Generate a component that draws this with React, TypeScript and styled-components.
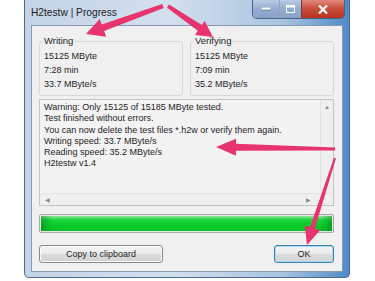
import styled, { createGlobalStyle } from "styled-components";

const GlobalStyle = createGlobalStyle`
  html, body {
    margin: 0;
    padding: 0;
    background: #ffffff;
  }
  body {
    font-family: "Liberation Sans", Arial, sans-serif;
    overflow: hidden;
  }
`;

const Stage = styled.div`
  position: relative;
  width: 375px;
  height: 281px;
`;

const Window = styled.div`
  margin-left: 24px;
  width: 326px;
  height: 278px;
  box-sizing: border-box;
  border: 1px solid #4a6a92;
  border-top: none;
  border-radius: 0 0 5px 5px;
  display: flex;
  flex-direction: column;
  background: linear-gradient(to right, #c3d4e7 0%, #d3e0ee 45%, #a8c3e0 80%, #4f8bc6 100%);
`;

const TitleBar = styled.div`
  height: 25px;
  display: flex;
  align-items: flex-start;
  justify-content: space-between;
  padding-left: 6px;
  padding-right: 4px;
  flex-shrink: 0;
`;

const Title = styled.span`
  font-size: 10.2px;
  line-height: 26px;
  color: #1c1c1c;
`;

const Controls = styled.div`
  display: flex;
  height: 18px;
  border: 1px solid #44628a;
  border-top: none;
  border-radius: 0 0 5px 5px;
  overflow: hidden;
`;

const CtrlButton = styled.div<{ $w: number; $close?: boolean }>`
  width: ${(p) => p.$w}px;
  height: 100%;
  display: flex;
  align-items: center;
  justify-content: center;
  border-left: ${(p) => (p.$close ? "1px solid #7a3a36" : "1px solid #8ea6c4")};
  background: ${(p) =>
    p.$close
      ? "linear-gradient(to bottom, #e08a7e 0%, #c9513f 45%, #b8321f 100%)"
      : "linear-gradient(to bottom, #b8cbe2 0%, #93acd0 50%, #8aa4c8 100%)"};
  &:first-child {
    border-left: none;
  }
`;

const Client = styled.div`
  flex: 1;
  margin: 0 6px 5px 6px;
  background: #f0f0f0;
  border: 1px solid #8799b1;
  padding: 10px 8px 0 7px;
  display: flex;
  flex-direction: column;
  font-size: 9px;
  color: #1e1e1e;
`;

const Groups = styled.div`
  display: flex;
  gap: 7px;
`;

const Group = styled.fieldset`
  flex: 1;
  margin: 0;
  padding: 3px 4px 4px 4px;
  border: 1px solid #d8d8d8;
  border-radius: 3px;
  min-width: 0;
`;

const Legend = styled.legend`
  padding: 0 1px;
  margin-left: -1px;
  font-size: 9.5px;
  line-height: 10px;
`;

const Stat = styled.div`
  line-height: 14px;
  white-space: nowrap;
`;

const LogBox = styled.div`
  margin-top: 3px;
  height: 107px;
  box-sizing: border-box;
  border: 1px solid #c4c4c4;
  background: #f3f3f3;
  display: flex;
  flex-direction: column;
`;

const LogMain = styled.div`
  flex: 1;
  display: flex;
  min-height: 0;
`;

const LogText = styled.div`
  flex: 1;
  padding: 2px 4px;
  line-height: 11.3px;
  white-space: nowrap;
  overflow: hidden;
`;

const VScroll = styled.div`
  width: 12px;
  border-left: 1px solid #e2e2e2;
  background: #efefef;
  display: flex;
  justify-content: center;
  color: #8a8a8a;
  font-size: 6px;
  padding-top: 4px;
`;

const HScroll = styled.div`
  height: 11px;
  display: flex;
  border-top: 1px solid #e2e2e2;
`;

const HTrack = styled.div`
  flex: 1;
  display: flex;
  align-items: center;
  justify-content: space-between;
  padding: 0 9px 0 5px;
  color: #8a8a8a;
  font-size: 6px;
  background: #efefef;
`;

const Corner = styled.div`
  width: 13px;
  background: #efefef;
`;

const Progress = styled.div`
  margin-top: 8px;
  height: 19px;
  box-sizing: border-box;
  border: 1px solid #a9a9a9;
  border-radius: 2px;
  padding: 1px;
  background: #e6e6e6;
`;

const ProgressFill = styled.div`
  height: 100%;
  background:
    linear-gradient(to right, rgba(0, 90, 20, 0.35) 0%, rgba(0, 0, 0, 0) 4%, rgba(0, 0, 0, 0) 96%, rgba(0, 90, 20, 0.35) 100%),
    linear-gradient(to bottom, #8ee89a 0%, #1fd53e 25%, #06cc2a 60%, #04c226 100%);
`;

const Buttons = styled.div`
  margin-top: 12px;
  display: flex;
  justify-content: space-between;
`;

const Button = styled.button<{ $w: number; $default?: boolean }>`
  width: ${(p) => p.$w}px;
  height: 18px;
  padding: 0;
  font-family: "Liberation Sans", Arial, sans-serif;
  font-size: 9px;
  color: #1e1e1e;
  border-radius: 3px;
  border: 1px solid ${(p) => (p.$default ? "#3c7fb1" : "#8a8a8a")};
  box-shadow: ${(p) => (p.$default ? "inset 0 0 0 1px #a8dcf5" : "inset 0 0 0 1px #fbfbfb")};
  background: linear-gradient(to bottom, #f4f4f4 0%, #ebebeb 50%, #dcdcdc 51%, #d2d2d2 100%);
`;

const Overlay = styled.svg`
  position: absolute;
  left: 0;
  top: 0;
  pointer-events: none;
`;

type Arrow = { x1: number; y1: number; x2: number; y2: number; tail: number; shaft: number; headLen: number; headW: number };

const arrows: Arrow[] = [
  { x1: 163, y1: 6, x2: 86, y2: 34, tail: 4, shaft: 7, headLen: 18, headW: 19 },
  { x1: 168, y1: 6, x2: 213, y2: 37, tail: 4, shaft: 7, headLen: 16, headW: 17 },
  { x1: 335, y1: 149, x2: 216, y2: 147, tail: 3, shaft: 7, headLen: 20, headW: 17 },
  { x1: 335, y1: 158, x2: 307, y2: 245, tail: 2, shaft: 5, headLen: 18, headW: 16 },
];

function arrowPoints(a: Arrow) {
  const dx = a.x2 - a.x1;
  const dy = a.y2 - a.y1;
  const len = Math.hypot(dx, dy);
  const ux = dx / len;
  const uy = dy / len;
  const nx = -uy;
  const ny = ux;
  const bx = a.x2 - ux * a.headLen;
  const by = a.y2 - uy * a.headLen;
  const pts = [
    [a.x1 + (nx * a.tail) / 2, a.y1 + (ny * a.tail) / 2],
    [bx + (nx * a.shaft) / 2, by + (ny * a.shaft) / 2],
    [bx + (nx * a.headW) / 2, by + (ny * a.headW) / 2],
    [a.x2, a.y2],
    [bx - (nx * a.headW) / 2, by - (ny * a.headW) / 2],
    [bx - (nx * a.shaft) / 2, by - (ny * a.shaft) / 2],
    [a.x1 - (nx * a.tail) / 2, a.y1 - (ny * a.tail) / 2],
  ];
  return pts.map((p) => p.map((v) => v.toFixed(1)).join(",")).join(" ");
}

const logLines = [
  "Warning: Only 15125 of 15185 MByte tested.",
  "Test finished without errors.",
  "You can now delete the test files *.h2w or verify them again.",
  "Writing speed: 33.7 MByte/s",
  "Reading speed: 35.2 MByte/s",
  "H2testw v1.4",
];

const App = () => {
  return (
    <Stage>
      <GlobalStyle />
      <Window>
        <TitleBar>
          <Title>H2testw | Progress</Title>
          <Controls>
            <CtrlButton $w={26}>
              <svg width="10" height="4" viewBox="0 0 10 4">
                <rect x="0" y="0" width="10" height="3" fill="#ffffff" stroke="#4a5f7c" strokeWidth="0.6" />
              </svg>
            </CtrlButton>
            <CtrlButton $w={21}>
              <svg width="9" height="8" viewBox="0 0 9 8">
                <rect x="0.5" y="0.5" width="8" height="7" fill="none" stroke="#ffffff" strokeWidth="1" />
                <rect x="1" y="1" width="7" height="1.5" fill="#ffffff" />
              </svg>
            </CtrlButton>
            <CtrlButton $w={42} $close>
              <svg width="10" height="9" viewBox="0 0 10 9">
                <path d="M1 0.5 L9 8.5 M9 0.5 L1 8.5" stroke="#ffffff" strokeWidth="2.2" />
              </svg>
            </CtrlButton>
          </Controls>
        </TitleBar>
        <Client>
          <Groups>
            <Group>
              <Legend>Writing</Legend>
              <Stat>15125 MByte</Stat>
              <Stat>7:28 min</Stat>
              <Stat>33.7 MByte/s</Stat>
            </Group>
            <Group>
              <Legend>Verifying</Legend>
              <Stat>15125 MByte</Stat>
              <Stat>7:09 min</Stat>
              <Stat>35.2 MByte/s</Stat>
            </Group>
          </Groups>
          <LogBox>
            <LogMain>
              <LogText>
                {logLines.map((l) => (
                  <div key={l}>{l}</div>
                ))}
              </LogText>
              <VScroll>▲</VScroll>
            </LogMain>
            <HScroll>
              <HTrack>
                <span>◀</span>
                <span>▶</span>
              </HTrack>
              <Corner />
            </HScroll>
          </LogBox>
          <Progress>
            <ProgressFill />
          </Progress>
          <Buttons>
            <Button $w={124}>Copy to clipboard</Button>
            <Button $w={60} $default>
              OK
            </Button>
          </Buttons>
        </Client>
      </Window>
      <Overlay width="375" height="281" viewBox="0 0 375 281">
        {arrows.map((a, i) => (
          <polygon key={i} points={arrowPoints(a)} fill="#e8346e" strokeLinejoin="round" />
        ))}
      </Overlay>
    </Stage>
  );
};

export default App;
